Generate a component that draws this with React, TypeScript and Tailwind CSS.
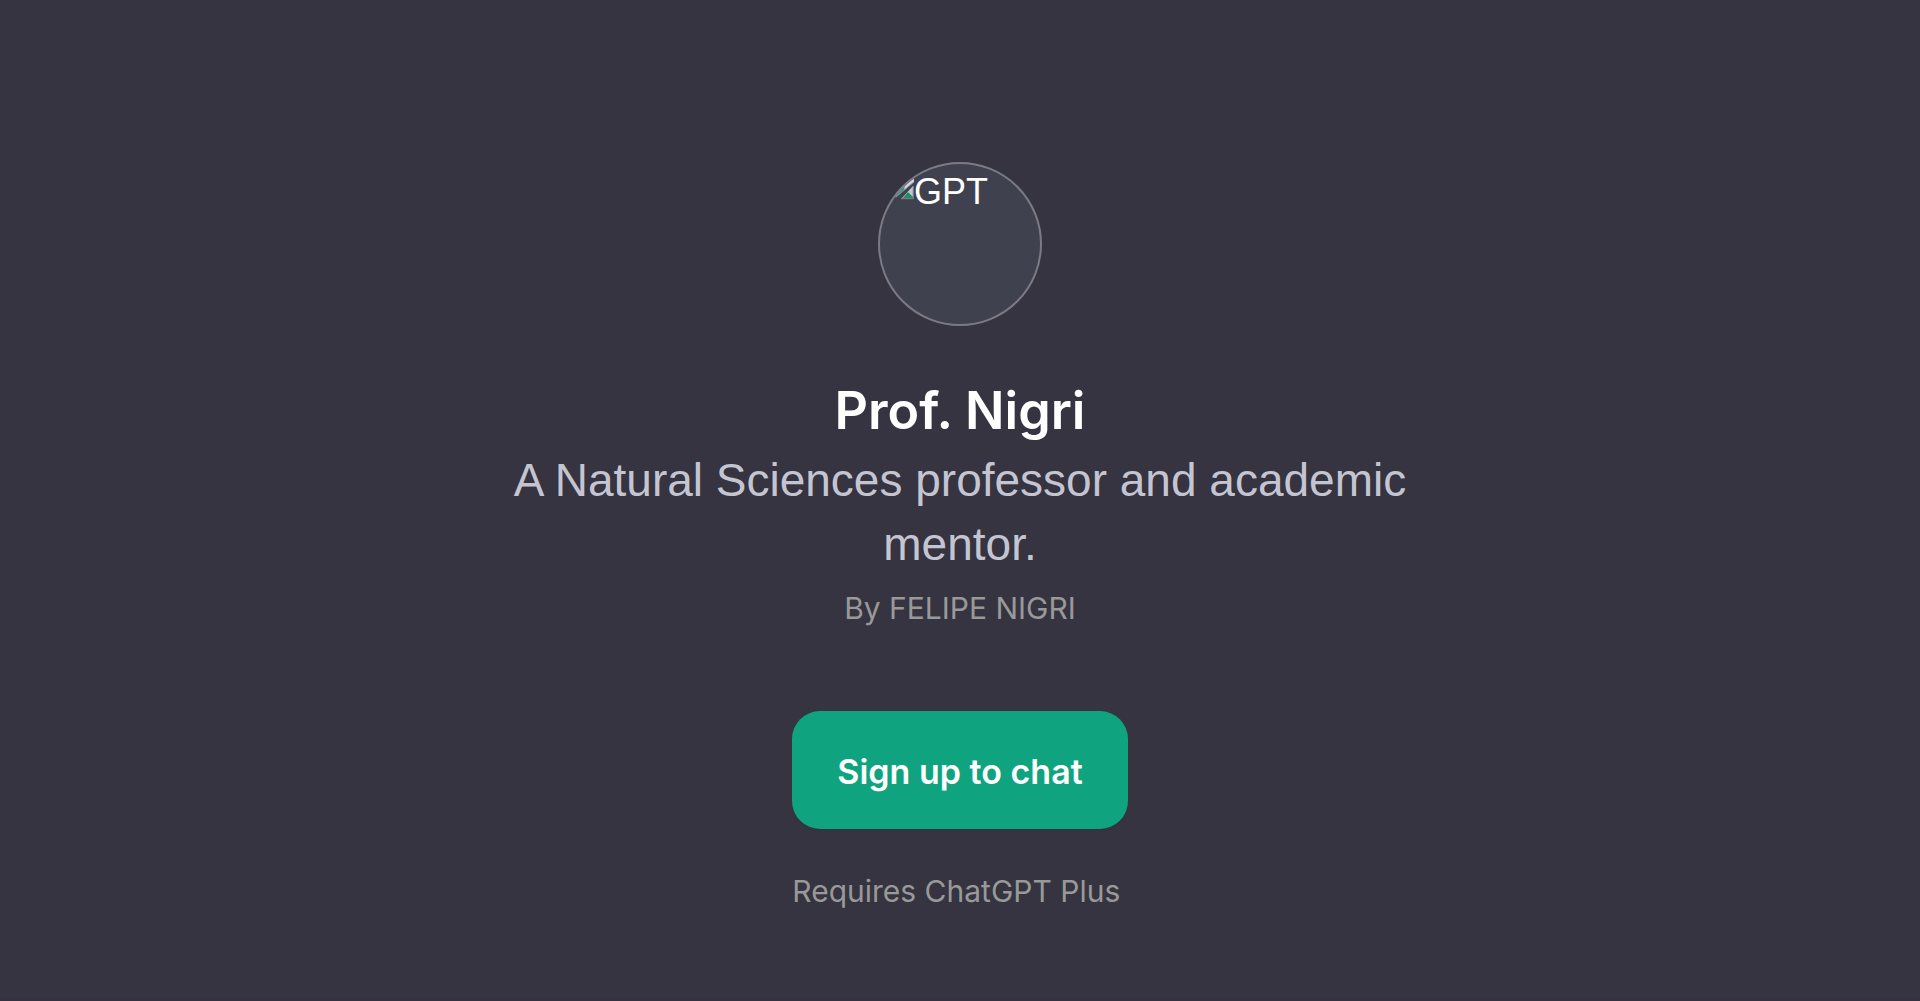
function BrokenImageIcon() {
  return (
    <svg className="size-8 shrink-0" viewBox="0 0 32 32" aria-hidden="true">
      <path d="M0 0h32v14L14 29H0z" fill="#d3d5de" />
      <path d="M0 32V17h23l-1 5-8 7z" fill="#2b9c78" />
      <path d="M32 14L14 29" fill="none" stroke="#85858d" strokeWidth="1" />
      <path d="M31 18v12H20z" fill="#c5c5d2" />
      <path d="M21 30l5-6 5 5v1z" fill="#1c8f68" />
      <path d="M19 30.500h12.500V18" fill="none" stroke="#77777f" strokeWidth="1.500" />
    </svg>
  );
}

export default function App() {
  return (
    <main className="flex min-h-screen flex-col items-center border-b-2 border-[#383040] bg-[#353440] px-6 pt-[162px] font-['Inter','Liberation_Sans',sans-serif] text-white">
      <div className="size-[164px] overflow-hidden rounded-full border-2 border-[#7b7b85] bg-[#40414f]">
        <div className="flex items-start pt-1 pl-0.5">
          <BrokenImageIcon />
          <span className="font-['Liberation_Sans',sans-serif] text-[36px] leading-[48px]">GPT</span>
        </div>
      </div>
      <h1 className="mt-12 text-center text-[52px] leading-[74px] font-semibold">Prof. Nigri</h1>
      <p className="max-w-[900px] text-center font-['Liberation_Sans',sans-serif] text-[46px] leading-[64px] text-[#c5c5d2]">
        A Natural Sciences professor and academic mentor.
      </p>
      <p className="text-center text-[30px] leading-[64px] text-[#999999]">By FELIPE NIGRI</p>
      <div className="mt-[71px] flex flex-col">
        <button
          type="button"
          className="rounded-[28px] bg-[#10a37f] px-[45px] pt-[34px] pb-[30px] text-[34px] leading-[54px] font-semibold shadow-xs"
        >
          Sign up to chat
        </button>
        <p className="mt-[34px] text-[30px] leading-[56px] text-[#999999]">Requires ChatGPT Plus</p>
      </div>
    </main>
  );
}
